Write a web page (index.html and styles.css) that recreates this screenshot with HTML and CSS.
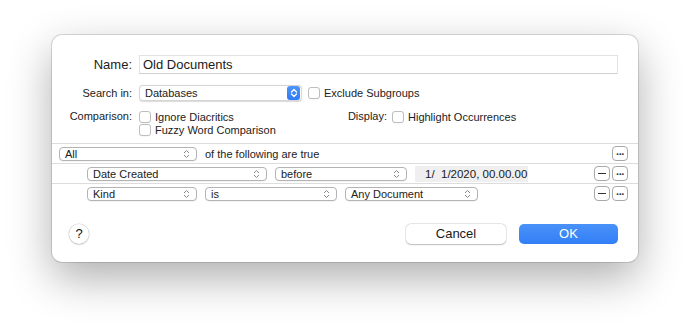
FILE: index.html
```html
<!DOCTYPE html>
<html>
<head>
<meta charset="utf-8">
<link rel="stylesheet" href="styles.css">
</head>
<body>
<div class="dialog">
  <div class="row name-row">
    <div class="label big">Name:</div>
    <div class="textfield">Old Documents</div>
  </div>
  <div class="row search-row">
    <div class="label">Search in:</div>
    <div class="popup blue-popup">Databases<span class="stepper"><svg width="8" height="10" viewBox="0 0 8 10"><path d="M1.5 4 L4 1.5 L6.5 4 M1.5 6 L4 8.5 L6.5 6" fill="none" stroke="#fff" stroke-width="1.3" stroke-linecap="round" stroke-linejoin="round"/></svg></span></div>
    <div class="check"><span class="box"></span>Exclude Subgroups</div>
  </div>
  <div class="row comp-row">
    <div class="label">Comparison:</div>
    <div class="options">
      <div class="check"><span class="box"></span>Ignore Diacritics</div>
      <div class="check"><span class="box"></span>Fuzzy Word Comparison</div>
    </div>
    <div class="label display-label">Display:</div>
    <div class="check"><span class="box"></span>Highlight Occurrences</div>
  </div>
  <div class="rules">
    <div class="rule first">
      <div class="popup w138">All<svg class="chev" width="7" height="10" viewBox="0 0 7 10"><path d="M1 4 L3.5 1.5 L6 4 M1 6 L3.5 8.5 L6 6" fill="none" stroke="#8a8a8a" stroke-width="1"/></svg></div>
      <span class="rule-text">of the following are true</span>
      <div class="spacer"></div>
      <div class="sbtn">···</div>
    </div>
    <div class="rule sub">
      <div class="popup w180">Date Created<svg class="chev" width="7" height="10" viewBox="0 0 7 10"><path d="M1 4 L3.5 1.5 L6 4 M1 6 L3.5 8.5 L6 6" fill="none" stroke="#8a8a8a" stroke-width="1"/></svg></div>
      <div class="popup w132">before<svg class="chev" width="7" height="10" viewBox="0 0 7 10"><path d="M1 4 L3.5 1.5 L6 4 M1 6 L3.5 8.5 L6 6" fill="none" stroke="#8a8a8a" stroke-width="1"/></svg></div>
      <div class="datefield">1/&nbsp;&nbsp;1/2020, 00.00.00</div>
      <div class="spacer"></div>
      <div class="sbtn minus"><span class="dash"></span></div>
      <div class="sbtn">···</div>
    </div>
    <div class="rule sub">
      <div class="popup w110">Kind<svg class="chev" width="7" height="10" viewBox="0 0 7 10"><path d="M1 4 L3.5 1.5 L6 4 M1 6 L3.5 8.5 L6 6" fill="none" stroke="#8a8a8a" stroke-width="1"/></svg></div>
      <div class="popup w132">is<svg class="chev" width="7" height="10" viewBox="0 0 7 10"><path d="M1 4 L3.5 1.5 L6 4 M1 6 L3.5 8.5 L6 6" fill="none" stroke="#8a8a8a" stroke-width="1"/></svg></div>
      <div class="popup w133">Any Document<svg class="chev" width="7" height="10" viewBox="0 0 7 10"><path d="M1 4 L3.5 1.5 L6 4 M1 6 L3.5 8.5 L6 6" fill="none" stroke="#8a8a8a" stroke-width="1"/></svg></div>
      <div class="spacer"></div>
      <div class="sbtn minus"><span class="dash"></span></div>
      <div class="sbtn">···</div>
    </div>
  </div>
  <div class="footer">
    <div class="help">?</div>
    <div class="spacer"></div>
    <div class="btn cancel">Cancel</div>
    <div class="btn ok">OK</div>
  </div>
</div>
</body>
</html>
```
FILE: styles.css
```css
* { box-sizing: border-box; }
html, body { margin: 0; padding: 0; background: #fff; }
body {
  padding: 35px 0 0 52px;
  min-height: 330px;
  font-family: "Liberation Sans", Arial, sans-serif;
  font-size: 11px;
  color: #222;
}
.dialog {
  width: 586px;
  height: 227px;
  background: #fff;
  border-radius: 10px;
  box-shadow: 0 0 0 1px rgba(0,0,0,0.13), 0 16px 44px rgba(0,0,0,0.32);
  padding-top: 20px;
  display: flex;
  flex-direction: column;
}
.row { display: flex; align-items: center; }
.label {
  width: 80px;
  text-align: right;
  margin-right: 7px;
  flex: none;
}
.label.big { font-size: 13px; }
.name-row { height: 19px; }
.textfield {
  width: 479px;
  height: 19px;
  border: 1px solid #e3e3e3;
  border-bottom-color: #d0d0d0;
  font-size: 13px;
  line-height: 17px;
  padding-left: 3px;
  color: #1a1a1a;
}
.search-row { margin-top: 11px; height: 16px; }
.popup {
  position: relative;
  height: 14px;
  border: 1px solid #b3b3b3;
  border-radius: 4px;
  background: #fff;
  padding-left: 5px;
  line-height: 12px;
  font-size: 11px;
  flex: none;
  box-shadow: 0 0.5px 0.5px rgba(0,0,0,0.08);
}
.popup .chev { position: absolute; right: 6px; top: 1px; }
.blue-popup {
  width: 163px;
  height: 16px;
  line-height: 14px;
  border-color: #d6d6d6;
  box-shadow: 0 0.5px 1px rgba(0,0,0,0.15);
}
.stepper {
  position: absolute;
  right: 1px;
  top: 0px;
  width: 13px;
  height: 14px;
  background: linear-gradient(#4d95fa, #2f7bf5);
  border-radius: 3px;
  display: flex;
  align-items: center;
  justify-content: center;
}
.check { display: flex; align-items: center; height: 13px; white-space: nowrap; }
.box {
  width: 12px;
  height: 12px;
  border: 1px solid #bdbdbd;
  border-radius: 3px;
  background: #fff;
  margin-right: 4px;
  flex: none;
  box-shadow: 0 0.5px 0.5px rgba(0,0,0,0.06);
}
.search-row .check { margin-left: 6px; }
.comp-row { margin-top: 9px; align-items: flex-start; }
.comp-row .label { line-height: 13px; }
.options { width: 180px; display: flex; flex-direction: column; flex: none; }
.display-label { width: 68px; margin-right: 5px; }
.rules { margin-top: 7px; }
.rule {
  height: 20px;
  border-top: 1px solid #dcdcdc;
  display: flex;
  align-items: center;
  padding-right: 10px;
  gap: 8px;
}
.rule.first { padding-left: 7px; }
.rule.sub { padding-left: 35px; }
.rule .spacer { flex: 1; }
.rule-text { font-size: 11px; }
.w138 { width: 138px; }
.w180 { width: 180px; }
.w132 { width: 132px; }
.w110 { width: 110px; }
.w133 { width: 133px; }
.datefield {
  width: 113px;
  height: 16px;
  background: #efefef;
  font-size: 11.5px;
  line-height: 16px;
  padding-left: 10px;
  color: #1a1a1a;
}
.sbtn {
  width: 16px;
  height: 15px;
  border: 1px solid #a8a8a8;
  border-radius: 4px;
  background: #fff;
  display: flex;
  align-items: center;
  justify-content: center;
  font-size: 11px;
  font-weight: bold;
  line-height: 12px;
  letter-spacing: -1px;
  flex: none;
  color: #333;
}
.rule .sbtn.minus { margin-right: -6px; }
.dash { width: 8px; height: 1.3px; background: #333; display: block; }
.footer {
  margin-top: 21px;
  height: 20px;
  display: flex;
  align-items: center;
  padding: 0 20px 0 17px;
}
.footer .spacer { flex: 1; }
.help {
  width: 20px;
  height: 20px;
  border-radius: 50%;
  background: #fff;
  box-shadow: 0 0 0 0.5px rgba(0,0,0,0.12), 0 0.5px 1.5px rgba(0,0,0,0.25);
  font-size: 13px;
  text-align: center;
  line-height: 20px;
  color: #111;
}
.btn {
  height: 20px;
  border-radius: 5px;
  font-size: 13px;
  text-align: center;
  line-height: 20px;
}
.cancel {
  width: 100px;
  background: #fff;
  box-shadow: 0 0 0 0.5px rgba(0,0,0,0.12), 0 0.5px 1.5px rgba(0,0,0,0.22);
  color: #1a1a1a;
  margin-right: 13px;
}
.ok {
  width: 99px;
  background: linear-gradient(#4a92f9, #327ef6);
  color: #fff;
}
```
